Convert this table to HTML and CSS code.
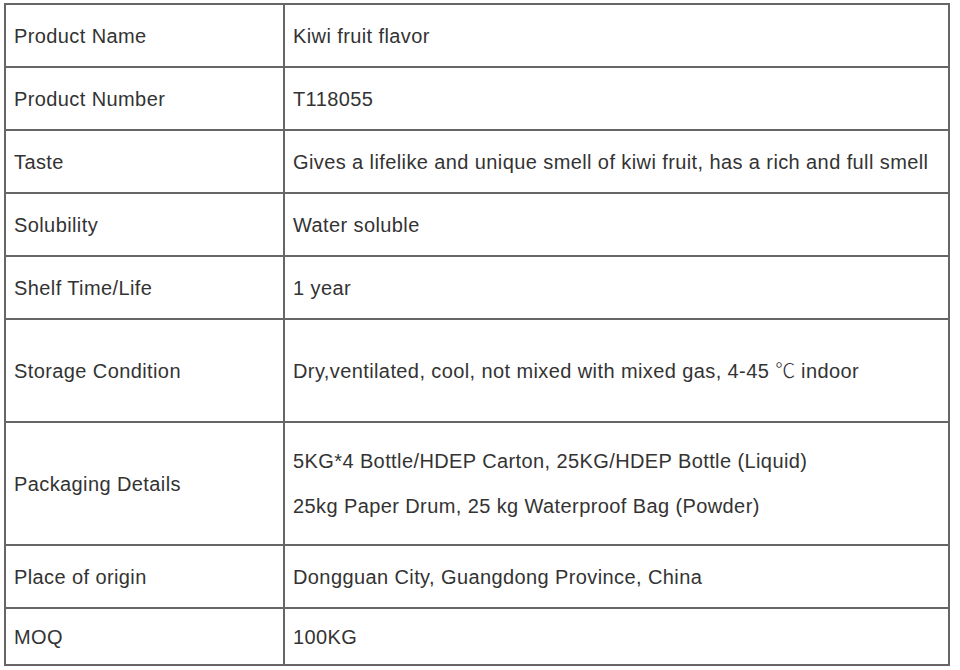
FILE: index.html
```html
<!DOCTYPE html>
<html>
<head>
<meta charset="utf-8">
<link rel="stylesheet" href="styles.css">
</head>
<body>
<table class="spec">
  <tr class="r61"><td class="k">Product Name</td><td class="v">Kiwi fruit flavor</td></tr>
  <tr class="r61"><td class="k">Product Number</td><td class="v">T118055</td></tr>
  <tr class="r61"><td class="k">Taste</td><td class="v">Gives a lifelike and unique smell of kiwi fruit, has a rich and full smell</td></tr>
  <tr class="r61"><td class="k">Solubility</td><td class="v">Water soluble</td></tr>
  <tr class="r61"><td class="k">Shelf Time/Life</td><td class="v">1 year</td></tr>
  <tr class="r101"><td class="k">Storage Condition</td><td class="v">Dry,ventilated, cool, not mixed with mixed gas, 4-45 <span class="unit">℃</span> indoor</td></tr>
  <tr class="r121"><td class="k">Packaging Details</td><td class="v"><p class="line">5KG*4 Bottle/HDEP Carton, 25KG/HDEP Bottle (Liquid)</p><p class="line">25kg Paper Drum, 25 kg Waterproof Bag (Powder)</p></td></tr>
  <tr class="r61"><td class="k">Place of origin</td><td class="v">Dongguan City, Guangdong Province, China</td></tr>
  <tr class="r55"><td class="k">MOQ</td><td class="v">100KG</td></tr>
</table>
</body>
</html>
```
FILE: styles.css
```css
html, body {
  margin: 0;
  padding: 0;
  background: #ffffff;
}
body {
  padding: 3px 0 0 4px;
  font-family: "Liberation Sans", Arial, sans-serif;
  font-size: 20px;
  letter-spacing: 0.4px;
  color: #333333;
}
.spec {
  border-collapse: collapse;
  width: 946px;
  table-layout: fixed;
}
.spec td {
  border: 2px solid #666666;
  padding: 0 8px;
  vertical-align: middle;
  line-height: 22px;
  white-space: nowrap;
}
.spec td.k {
  width: 261px;
}
.r61 td { height: 61px; }
.r101 td { height: 101px; }
.r121 td { height: 121px; }
.r55 td { height: 55px; }
.line {
  margin: 0;
}
.line + .line {
  margin-top: 23px;
}
.unit {
  font-family: "Noto Sans CJK SC", "Liberation Sans", sans-serif;
  font-weight: 300;
  letter-spacing: 0;
}
```
